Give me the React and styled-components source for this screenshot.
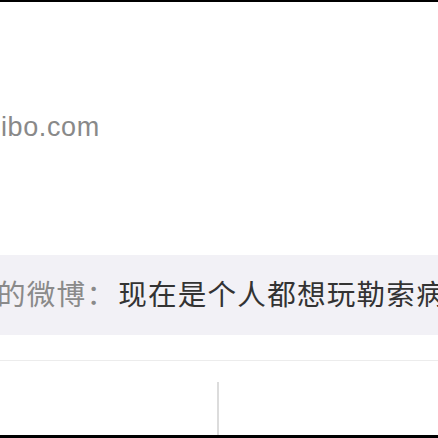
import React from 'react'
import styled, { createGlobalStyle } from 'styled-components'

const Global = createGlobalStyle`
  html, body { margin: 0; padding: 0; background: #fff; }
  body { font-family: "Liberation Sans", "Noto Sans CJK SC", sans-serif; }
`

const Frame = styled.div`
  width: 438px;
  height: 438px;
  box-sizing: border-box;
  border-top: 2px solid #000;
  border-bottom: 3px solid #000;
  display: flex;
  flex-direction: column;
  overflow: hidden;
`

const Source = styled.div`
  height: 133px;
  padding-top: 109px;
  padding-left: 1px;
  font-size: 27px;
  letter-spacing: 0.6px;
  color: #898989;
  line-height: 32px;
  white-space: nowrap;
`

const Quote = styled.div`
  margin-top: 11px;
  height: 80px;
  box-sizing: border-box;
  padding-bottom: 4px;
  background: #f2f1f6;
  display: flex;
  align-items: center;
  white-space: nowrap;
  overflow: hidden;
  font-family: "Noto Sans CJK SC", sans-serif;
  font-size: 28.6px;
  letter-spacing: 1.2px;
  line-height: 1;
`

const Author = styled.span`
  color: #8a8a8a;
  margin-left: -3px;
`

const Body = styled.span`
  color: #333;
  margin-left: 2px;
`

const Rule = styled.div`
  margin-top: 25px;
  height: 1px;
  background: #ececec;
`

const Actions = styled.div`
  flex: 1;
  display: grid;
  grid-template-columns: 219px 1fr;
  padding-top: 21px;
`

const Cell = styled.div`
  border-right: ${p => (p.$divided ? '2px solid #dcdcdc' : 'none')};
`

export default function App () {
  return (
    <>
      <Global />
      <Frame>
        <Source>ibo.com</Source>
        <Quote>
          <Author>的微博：</Author>
          <Body>现在是个人都想玩勒索病毒</Body>
        </Quote>
        <Rule />
        <Actions>
          <Cell $divided />
          <Cell />
        </Actions>
      </Frame>
    </>
  )
}
